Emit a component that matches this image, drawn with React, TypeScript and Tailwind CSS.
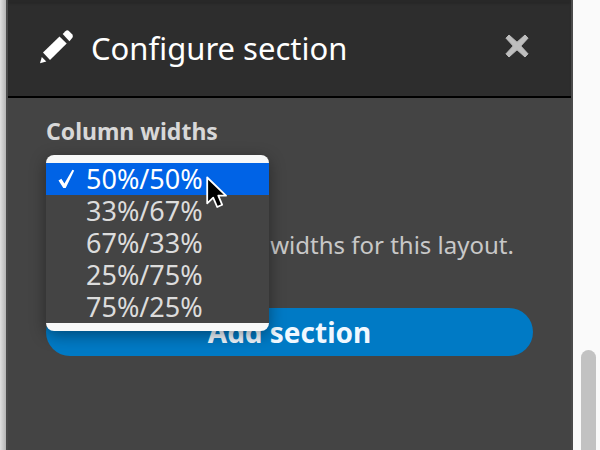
import React, { useState } from 'react';

const widthOptions = ['50%/50%', '33%/67%', '67%/33%', '25%/75%', '75%/25%'];

const PencilIcon = () => (
  <svg width="34" height="36" viewBox="0 0 34 36" fill="#fff" aria-hidden="true">
    <path d="M22.7 6 25.4 3.2q1.6-1.4 3.2-.5L32.4 6.4q1 1.8 0 3.4L29.4 13.3Z" />
    <path d="M19.5 8.4 26.7 15.4 10 32 3 24.6Z" />
    <path d="M1.8 29 6.3 33.6 0 35.2Z" />
  </svg>
);

const CloseIcon = () => (
  <svg width="24" height="24" viewBox="0 0 24 24" aria-hidden="true">
    <path
      d="M4 1 12 8.2 20 1 23 4.2 15.8 12 23 19.8 20 23 12 15.8 4 23 1 19.8 8.2 12 1 4.2Z"
      fill="#bebebe"
      stroke="#bebebe"
      strokeWidth="1"
      strokeLinejoin="round"
    />
  </svg>
);

const CheckIcon = () => (
  <svg width="18" height="20" viewBox="0 0 18 20" aria-hidden="true">
    <path d="M.5 11.5 3.4 9.8l3 4.8L14.4.8l1.8.8L7.7 19H5.3Z" fill="#fff" />
  </svg>
);

const Pointer = () => (
  <svg width="22" height="35" viewBox="0 0 22 35" aria-hidden="true">
    <path
      d="M1.2 2.5V28.3L7.2 22.7 11.2 32 16.2 29.8 12.3 20.7H20Z"
      fill="#000"
      stroke="#fff"
      strokeWidth="1.8"
      strokeLinejoin="round"
    />
  </svg>
);

type WidthSelectProps = {
  value: string;
  onChange: (value: string) => void;
};

// Select with its menu open on top of it
const WidthSelect = ({ value, onChange }: WidthSelectProps) => {
  return (
    <div className="relative w-[223px]">
      <select
        id="column-widths"
        value={value}
        onChange={(e) => onChange(e.target.value)}
        className="block h-10 w-full rounded bg-[#444] px-2 text-[27px] text-[#ddd]"
      >
        {widthOptions.map((option) => (
          <option key={option} value={option}>
            {option}
          </option>
        ))}
      </select>
      <ul
        role="listbox"
        aria-label="Column widths"
        className="absolute left-0 top-0 z-10 w-full overflow-hidden rounded-lg bg-[#f7f8f8] py-2 shadow-[0_4px_16px_rgba(0,0,0,0.4)]"
      >
        {widthOptions.map((option) => (
          <li key={option} role="option" aria-selected={option === value}>
            <button
              type="button"
              onClick={() => onChange(option)}
              className={`flex h-8 w-full items-center pl-3 text-left text-[27px] leading-8 ${
                option === value ? 'bg-[#0063e6] text-white' : 'bg-[#444] text-[#dcdcdc]'
              }`}
            >
              <span className="w-7">{option === value && <CheckIcon />}</span>
              {option}
            </button>
          </li>
        ))}
      </ul>
      <div className="pointer-events-none absolute left-40 top-5 z-20">
        <Pointer />
      </div>
    </div>
  );
};

const App = () => {
  const [widths, setWidths] = useState('50%/50%');

  return (
    <div className="flex min-h-screen bg-[#fafafa] font-['Noto_Sans',sans-serif]">
      <div className="w-1.5 shrink-0 bg-linear-to-r from-[#e0e0e0] to-[#b5b5b5]" />
      <main className="min-w-0 flex-1 border-x-2 border-[#4a4a4a] bg-[#444]">
        <header className="flex h-[98px] items-center justify-between border-b-2 border-black bg-[#2d2d2d] pb-1 pl-8 pr-[42px] shadow-[inset_0_4px_2px_#282828]">
          <div className="flex items-center gap-[17px]">
            <PencilIcon />
            <h1 className="pt-1 text-[31px] leading-10 text-white">Configure section</h1>
          </div>
          <button type="button" aria-label="Close">
            <CloseIcon />
          </button>
        </header>
        <form className="px-[38px] pt-[17px]" onSubmit={(e) => e.preventDefault()}>
          <label htmlFor="column-widths" className="mb-2 block text-[23px] font-bold leading-8 text-[#d8d8d8]">
            Column widths
          </label>
          <WidthSelect value={widths} onChange={setWidths} />
          <p className="mt-8 whitespace-nowrap text-[24px] leading-9 text-[#c8c8c8]">
            Choose the column widths for this layout.
          </p>
          <button
            type="submit"
            className="mt-[45px] block h-12 w-full rounded-full bg-[#007ac5] text-[28px] font-bold text-[#f0f8ff]"
          >
            Add section
          </button>
        </form>
      </main>
      <div className="w-[27px] shrink-0 pl-2 pt-[350px]">
        <div className="h-[100px] w-[15px] rounded-t-full bg-[#c2c2c2]" />
      </div>
    </div>
  );
};

export default App;
